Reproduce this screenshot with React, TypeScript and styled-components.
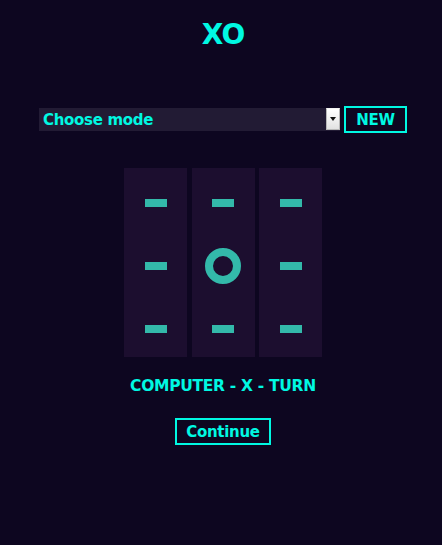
import React, { useState } from 'react'
import styled, { createGlobalStyle } from 'styled-components'

const GlobalStyle = createGlobalStyle`
  html, body {
    margin: 0;
    padding: 0;
    background: #0d0620;
  }
  body {
    font-family: "DejaVu Sans", "Open Sans", sans-serif;
    color: #00f8e2;
  }
`

const Page = styled.div`
  min-height: 545px;
  display: flex;
  flex-direction: column;
  align-items: center;
  padding-left: 4px;
  box-sizing: border-box;
`

const Title = styled.h1`
  margin: 18px 0 0;
  font-size: 28px;
  line-height: 34px;
  font-weight: bold;
  letter-spacing: -1px;
`

const Controls = styled.div`
  margin-top: 54px;
  display: flex;
  align-items: center;
  gap: 4px;
`

const SelectBox = styled.div`
  display: flex;
  width: 301px;
  height: 23px;
  background: #221b34;
`

const Select = styled.select`
  flex: 1;
  appearance: none;
  border: none;
  outline: none;
  background: transparent;
  color: #00f8e2;
  font-family: inherit;
  font-weight: bold;
  font-size: 15px;
  padding: 0 4px;
  letter-spacing: -0.3px;
`

const Arrow = styled.span`
  width: 14px;
  height: 22px;
  background: linear-gradient(#ffffff, #e2e2e2);
  border: 1px solid #b8b8b8;
  border-top-color: #f4f4f4;
  box-sizing: border-box;
  display: flex;
  align-items: center;
  justify-content: center;

  &::after {
    content: '';
    border-left: 3px solid transparent;
    border-right: 3px solid transparent;
    border-top: 4px solid #111;
  }
`

const OutlineButton = styled.button<{ $w: number }>`
  width: ${({ $w }) => $w}px;
  height: 27px;
  background: transparent;
  border: 2px solid #00f8e2;
  color: #00f8e2;
  font-family: inherit;
  font-weight: bold;
  font-size: 15px;
  padding: 0;
  letter-spacing: -0.3px;
  cursor: pointer;
`

const Board = styled.div`
  margin-top: 35px;
  display: grid;
  grid-template-columns: repeat(3, 63px);
  column-gap: 4.5px;
`

const Column = styled.div`
  background: #1c0e2f;
  display: flex;
  flex-direction: column;
`

const Cell = styled.div`
  height: 63px;
  display: flex;
  align-items: center;
  justify-content: center;
  padding-top: 7px;
  box-sizing: border-box;
`

const Dash = styled.span`
  width: 22px;
  height: 8px;
  background: #33b9aa;
`

const Ring = styled.span`
  width: 36px;
  height: 36px;
  border-radius: 50%;
  border: 8px solid #33b9aa;
  box-sizing: border-box;
  margin-top: -1px;
`

const Status = styled.p`
  margin: 20px 0 0;
  font-size: 15.5px;
  font-weight: bold;
  letter-spacing: -0.3px;
`

const ContinueRow = styled.div`
  margin-top: 23px;
`

export default function App() {
  // board[row][col]
  const [board] = useState<string[][]>([
    ['', '', ''],
    ['', 'O', ''],
    ['', '', ''],
  ])
  return (
    <Page>
      <GlobalStyle />
      <Title>XO</Title>
      <Controls>
        <SelectBox>
          <Select defaultValue="">
            <option value="">Choose mode</option>
            <option value="pvp">Player vs Player</option>
            <option value="pvc">Player vs Computer</option>
          </Select>
          <Arrow />
        </SelectBox>
        <OutlineButton $w={63}>NEW</OutlineButton>
      </Controls>
      <Board>
        {[0, 1, 2].map((c) => (
          <Column key={c}>
            {[0, 1, 2].map((r) => (
              <Cell key={r}>{board[r][c] === 'O' ? <Ring /> : <Dash />}</Cell>
            ))}
          </Column>
        ))}
      </Board>
      <Status>COMPUTER - X - TURN</Status>
      <ContinueRow>
        <OutlineButton $w={96}>Continue</OutlineButton>
      </ContinueRow>
    </Page>
  )
}
